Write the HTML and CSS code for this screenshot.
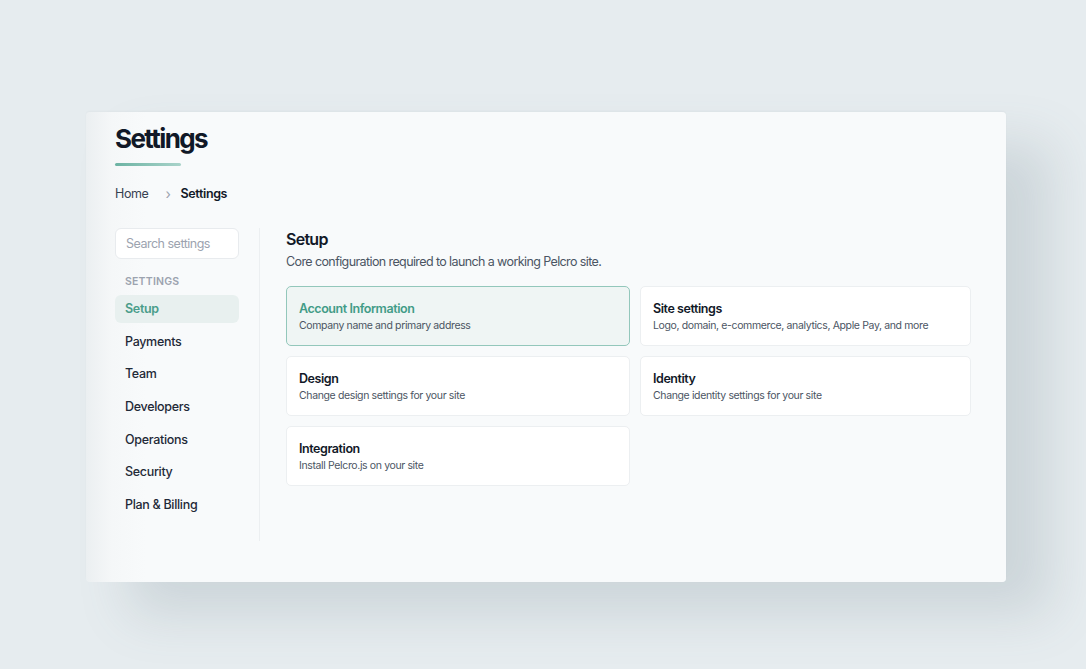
FILE: index.html
```html
<!DOCTYPE html>
<html lang="en">
<head>
    <meta charset="UTF-8">
    <title>Settings</title>
    <link rel="stylesheet" href="styles.css">
</head>
<body>

<div class="panel">
    <div class="page-header">
        <h1>Settings</h1>
        <div class="title-bar"></div>
        <div class="breadcrumb">
            <span class="crumb">Home</span>
            <span class="crumb-sep">&#8250;</span>
            <span class="crumb current">Settings</span>
        </div>
    </div>

    <div class="layout">
        <aside class="sidebar">
            <input type="text" class="search" placeholder="Search settings">
            <div class="nav-label">Settings</div>
            <nav class="nav">
                <a class="nav-item active">Setup</a>
                <a class="nav-item">Payments</a>
                <a class="nav-item">Team</a>
                <a class="nav-item">Developers</a>
                <a class="nav-item">Operations</a>
                <a class="nav-item">Security</a>
                <a class="nav-item">Plan &amp; Billing</a>
            </nav>
        </aside>

        <main class="content">
            <h2>Setup</h2>
            <p class="lead">Core configuration required to launch a working Pelcro site.</p>

            <div class="cards">
                <div class="card active">
                    <div class="card-title">Account Information</div>
                    <div class="card-desc">Company name and primary address</div>
                </div>
                <div class="card">
                    <div class="card-title">Site settings</div>
                    <div class="card-desc">Logo, domain, e-commerce, analytics, Apple Pay, and more</div>
                </div>
                <div class="card">
                    <div class="card-title">Design</div>
                    <div class="card-desc">Change design settings for your site</div>
                </div>
                <div class="card">
                    <div class="card-title">Identity</div>
                    <div class="card-desc">Change identity settings for your site</div>
                </div>
                <div class="card">
                    <div class="card-title">Integration</div>
                    <div class="card-desc">Install Pelcro.js on your site</div>
                </div>
            </div>
        </main>
    </div>
</div>

</body>
</html>
```

FILE: styles.css
```css
body, html {
    margin: 0;
    padding: 0;
    background-color: #e6ecef;
    font-family: Inter, "Noto Sans", sans-serif;
    color: #111827;
    letter-spacing: -0.04em;
}

body {
    padding: 112px 0 0 86px;
    height: 669px;
    box-sizing: border-box;
    overflow: hidden;
}

.panel {
    width: 920px;
    height: 470px;
    box-sizing: border-box;
    padding: 11px 36px 0 29px;
    border-radius: 4px;
    background: linear-gradient(90deg, #ebeff1 0, #f5f7f8 26px, #f8fafb 60px);
    box-shadow: 44px 32px 52px rgba(90, 110, 120, 0.18), 0 -1px 2px rgba(0, 0, 0, 0.03);
}

h1 {
    margin: 0;
    font-size: 26px;
    line-height: 32px;
    font-weight: 700;
    letter-spacing: -0.062em;
    color: #111827;
}

.title-bar {
    width: 66px;
    height: 3px;
    margin-top: 8px;
    border-radius: 2px;
    background: linear-gradient(90deg, #6cb3a3, #a9d3ca);
}

.breadcrumb {
    display: flex;
    align-items: center;
    margin-top: 18px;
    font-size: 12.5px;
    line-height: 20px;
    letter-spacing: -0.03em;
    color: #374151;
}

.crumb-sep {
    margin: 0 10px 0 17px;
    color: #9ca3af;
    font-size: 14px;
}

.crumb.current {
    font-weight: 600;
    color: #111827;
}

.layout {
    display: flex;
    margin-top: 24px;
}

.sidebar {
    width: 124px;
    padding-right: 20px;
    border-right: 1px solid #eceff1;
    height: 313px;
}

.search {
    width: 124px;
    height: 31px;
    box-sizing: border-box;
    padding: 0 10px;
    border: 1px solid #e8ebee;
    border-radius: 6px;
    background: #fff;
    font-family: inherit;
    font-size: 12.5px;
    letter-spacing: -0.04em;
    color: #111827;
    outline: none;
}

.search::placeholder {
    color: #9ca3af;
}

.nav-label {
    margin: 16px 0 6px 10px;
    font-size: 10.5px;
    line-height: 14px;
    font-weight: 600;
    letter-spacing: 0.02em;
    text-transform: uppercase;
    color: #9ca3af;
}

.nav {
    display: flex;
    flex-direction: column;
    gap: 4.7px;
}

.nav-item {
    display: block;
    height: 28px;
    line-height: 28px;
    padding: 0 10px;
    border-radius: 6px;
    font-size: 12.5px;
    font-weight: 500;
    letter-spacing: -0.025em;
    color: #1f2937;
}

.nav-item.active {
    background-color: #e8f0ef;
    color: #4a9d8a;
    font-weight: 600;
}

.content {
    flex: 1;
    padding-left: 26px;
}

h2 {
    margin: 0;
    font-size: 16px;
    line-height: 22px;
    font-weight: 600;
    letter-spacing: -0.045em;
    color: #111827;
}

.lead {
    margin: 1px 0 0;
    font-size: 12.5px;
    line-height: 22px;
    letter-spacing: -0.048em;
    color: #4b5563;
}

.cards {
    display: grid;
    grid-template-columns: 344px 331px;
    gap: 10px;
    margin-top: 13px;
}

.card {
    height: 60px;
    box-sizing: border-box;
    padding: 13px 12px 0;
    border: 1px solid #eceff1;
    border-radius: 5px;
    background: #fff;
}

.card.active {
    background-color: #eff5f4;
    border-color: #93c7bb;
}

.card-title {
    font-size: 12.5px;
    line-height: 17px;
    font-weight: 600;
    letter-spacing: -0.035em;
    color: #111827;
}

.card.active .card-title {
    color: #429c87;
}

.card-desc {
    margin-top: 1px;
    font-size: 10.5px;
    line-height: 16px;
    letter-spacing: -0.035em;
    color: #4b5563;
}
```
